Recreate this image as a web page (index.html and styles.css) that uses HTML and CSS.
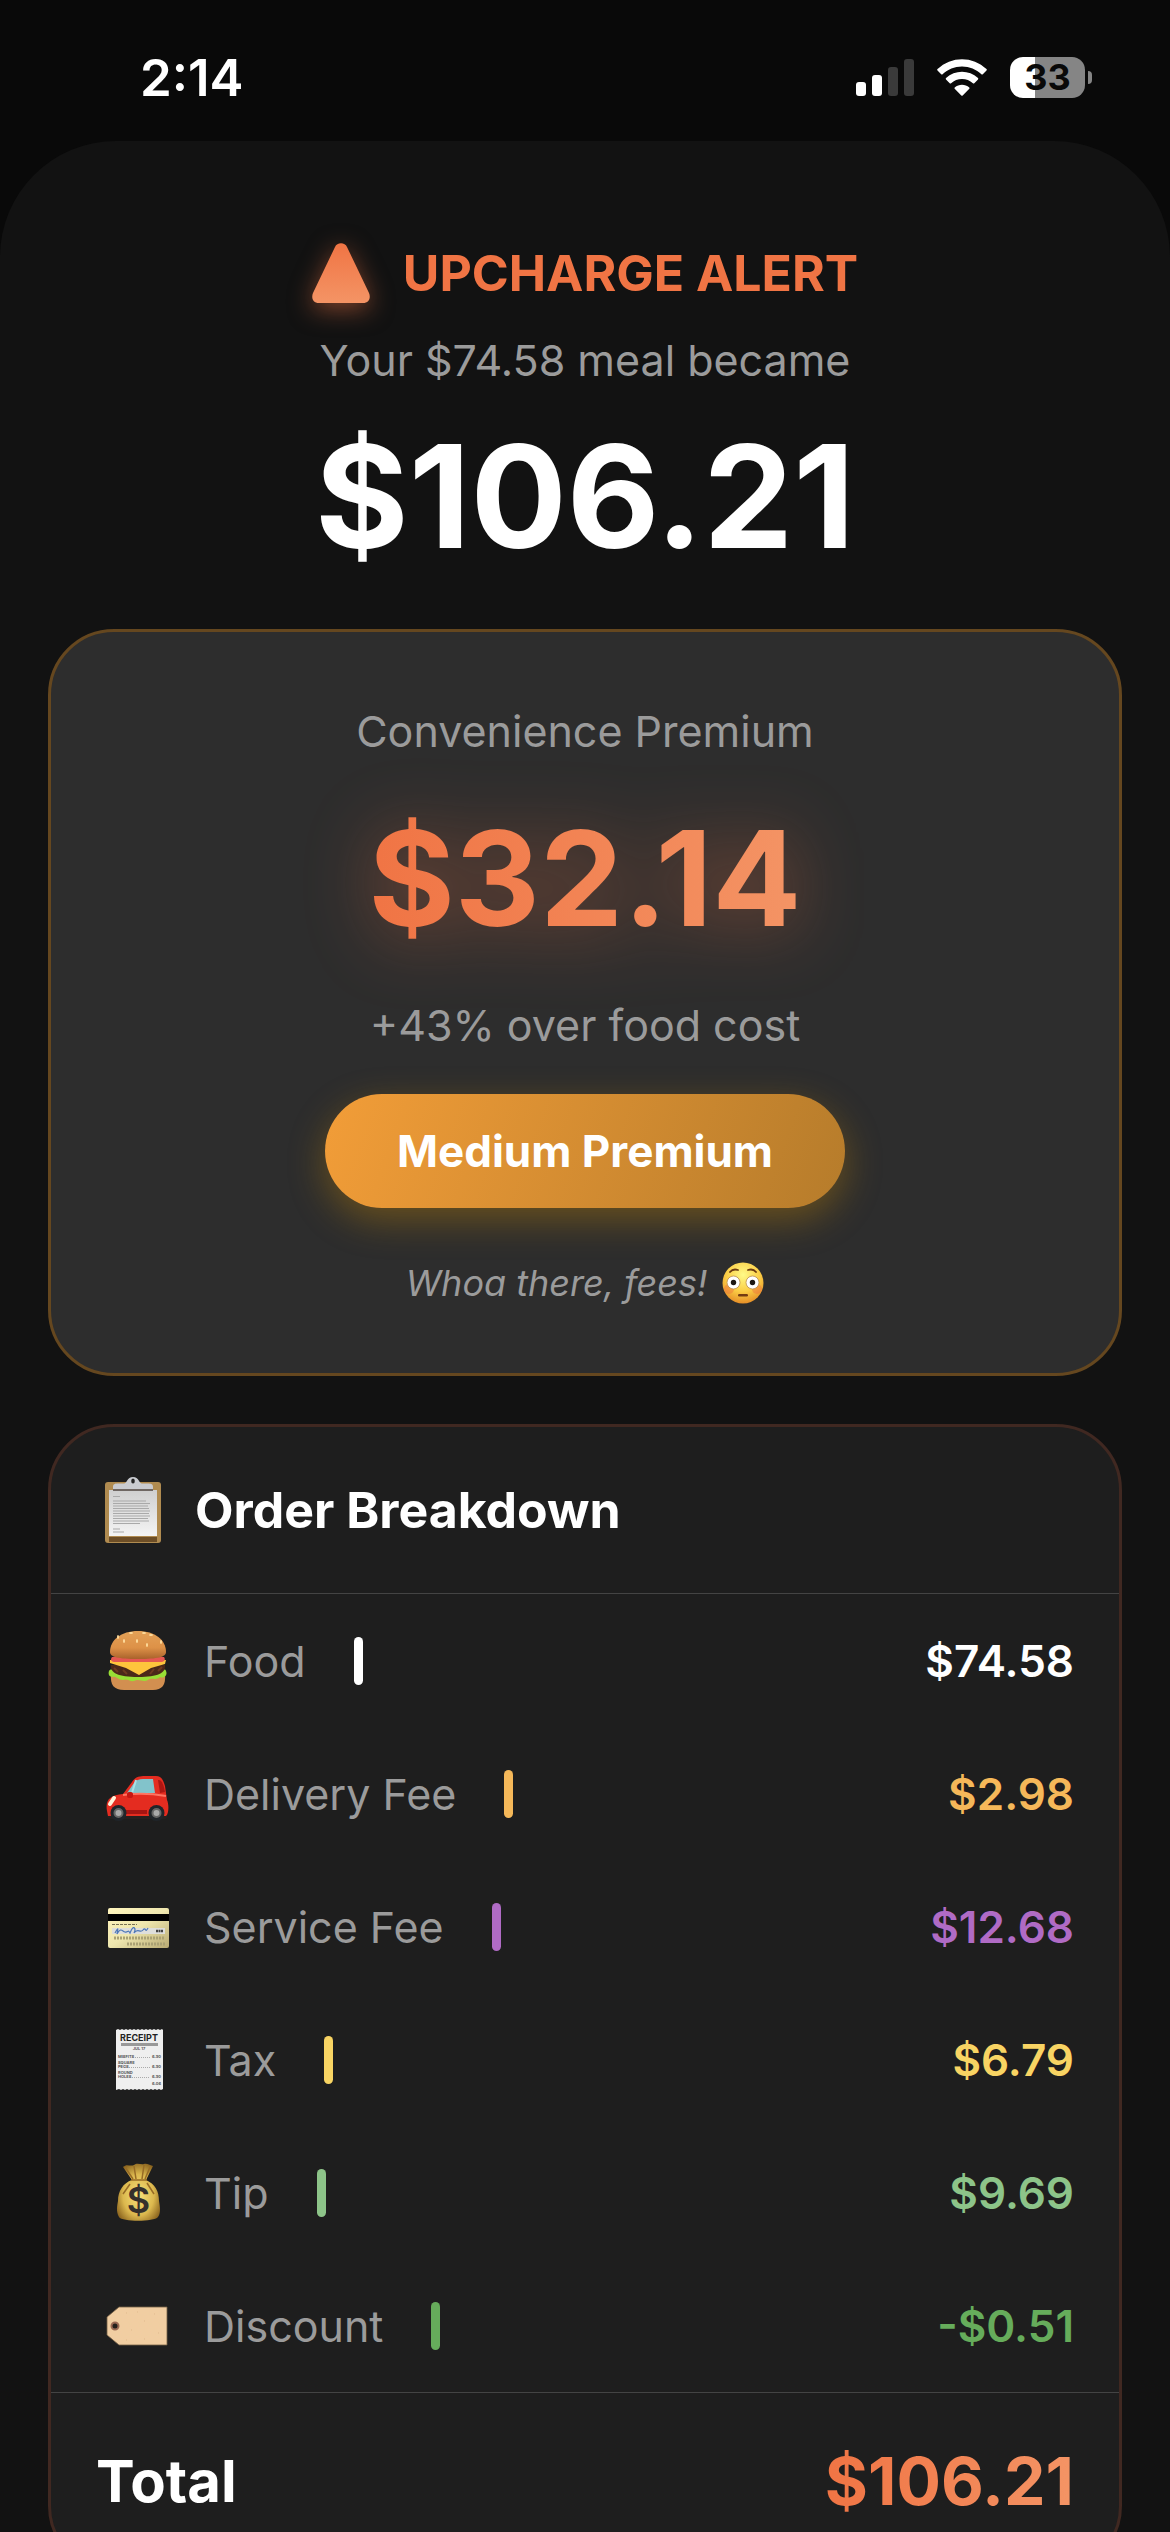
FILE: index.html
```
<!DOCTYPE html>
<html lang="en">
<head>
    <meta charset="UTF-8">
    <meta name="viewport" content="width=device-width, initial-scale=1.0">
    <title>Upcharge Alert</title>
    <link rel="stylesheet" href="styles.css">
</head>
<body>
    <div class="status-bar">
      <span class="time">2:14</span>
      <div class="status-icons">
        <svg width="58" height="37" viewBox="0 0 58 37" fill="#fff">
          <rect x="0" y="23" width="10" height="14" rx="3"/>
          <rect x="16" y="16" width="10" height="21" rx="3"/>
          <rect x="32" y="8" width="10" height="29" rx="3" fill="#3a3a3a"/>
          <rect x="48" y="0" width="10" height="37" rx="3" fill="#3a3a3a"/>
        </svg>
        <svg width="52" height="37" viewBox="0 0 52 37" fill="#fff">
          <path d="M26 7.500C33.500 7.500 40.300 10.400 45.400 15.200C45.800 15.600 46.400 15.600 46.800 15.200L50.500 11.500C50.900 11.100 50.900 10.500 50.500 10.100C36.800-3.200 15.200-3.200 1.500 10.100C1.100 10.500 1.100 11.100 1.500 11.500L5.200 15.200C5.600 15.600 6.200 15.600 6.600 15.200C11.700 10.400 18.500 7.500 26 7.500Z"/>
          <path d="M26 20C30.100 20 34 21.500 36.900 24.200C37.300 24.600 37.900 24.600 38.300 24.200L42 20.500C42.400 20.100 42.400 19.400 42 19C33 10.600 19 10.600 10 19C9.600 19.400 9.600 20.100 10 20.500L13.700 24.200C14.100 24.600 14.700 24.600 15.100 24.200C18 21.500 21.900 20 26 20Z"/>
          <path d="M33.300 28.400C33.700 28.800 33.700 29.400 33.300 29.800L26.700 36.400C26.300 36.800 25.700 36.800 25.300 36.400L18.700 29.800C18.300 29.400 18.300 28.800 18.700 28.400C22.900 24.800 29.100 24.800 33.300 28.400Z"/>
        </svg>
        <div class="battery"><span class="battery-body">33</span><span class="battery-tip"></span></div>
      </div>
    </div>

    <main class="sheet">
      <header class="alert">
        <h1 class="alert-title">
          <svg class="alert-icon" width="58" height="60" viewBox="0 0 58 60">
            <defs>
              <linearGradient id="alertFill" x1="0" y1="0" x2="0" y2="1">
                <stop offset="0" stop-color="#f07444"/>
                <stop offset="1" stop-color="#f49465"/>
              </linearGradient>
            </defs>
            <path d="M23 4C25-1 33-1 35 4L57 50C59 55 57 60 51 60H7C1 60-1 55 1 50Z" fill="url(#alertFill)"/>
          </svg>
          UPCHARGE ALERT
        </h1>
        <p class="muted">Your $74.58 meal became</p>
        <p class="alert-total">$106.21</p>
      </header>

      <section class="card premium">
        <p class="muted">Convenience Premium</p>
        <p class="premium-amount"><span class="gradient-text">$32.14</span></p>
        <p class="muted">+43% over food cost</p>
        <button type="button" class="btn-level">Medium Premium</button>
        <p class="quip">
          <em>Whoa there, fees!</em>
          <svg width="42" height="42" viewBox="0 0 42 42">
            <defs>
              <radialGradient id="faceFill" cx=".5" cy=".3" r=".75">
                <stop offset="0" stop-color="#fffa88"/>
                <stop offset=".55" stop-color="#fbcd45"/>
                <stop offset="1" stop-color="#e28422"/>
              </radialGradient>
            </defs>
            <circle cx="21" cy="21" r="20.500" fill="url(#faceFill)"/>
            <circle cx="7" cy="27" r="5" fill="#ee713d" opacity=".45"/>
            <circle cx="35" cy="27" r="5" fill="#ee713d" opacity=".45"/>
            <path d="M8 10C10 7.500 13 7 16 8M26 8C29 7 32 7.500 34 10" stroke="#6b3a10" stroke-width="1.800" fill="none" stroke-linecap="round"/>
            <circle cx="11.500" cy="20.500" r="6.500" fill="#fff" stroke="#b98d50" stroke-width=".8"/>
            <circle cx="30.500" cy="20.500" r="6.500" fill="#fff" stroke="#b98d50" stroke-width=".8"/>
            <circle cx="11.500" cy="20.500" r="2.700" fill="#1d1714"/>
            <circle cx="30.500" cy="20.500" r="2.700" fill="#1d1714"/>
            <rect x="16" y="32" width="10" height="2.400" rx="1.200" fill="#743c12"/>
          </svg>
        </p>
      </section>

      <section class="card breakdown">
        <h2 class="breakdown-title">
          <svg width="74" height="72" viewBox="0 0 74 72">
            <defs>
              <linearGradient id="paperFill" x1="0" y1="0" x2="0" y2="1">
                <stop offset="0" stop-color="#cfcfcf"/>
                <stop offset="1" stop-color="#f4f4f4"/>
              </linearGradient>
            </defs>
            <rect x="9" y="8" width="56" height="61" rx="3" fill="#b08b50"/>
            <path d="M13 63H61V68H13Z" fill="#6d4e27"/>
            <rect x="13" y="16" width="48" height="46" fill="url(#paperFill)"/>
            <path d="M17 22.500H24M17 27H50M17 29.500H54M17 32H52M17 34.500H53M17 37H54M17 39.500H53M17 42H54M17 44.500H52M17 47H53M17 49.500H44M17 55H24M17 58H28" stroke="#a9a9a9" stroke-width="1"/>
            <path d="M17 16V13C17 10 19 9.500 22 9.500H28C31 9.500 31 3 37 3S43 9.500 46 9.500H52C55 9.500 57 10 57 13V16Z" fill="#c9cbd0"/>
            <path d="M17 15H57V17H17Z" fill="#6f6763"/>
            <ellipse cx="37" cy="7" rx="1.800" ry="2.600" fill="#252525"/>
          </svg>
          Order Breakdown
        </h2>
        <table class="fees">
          <tbody>
            <tr>
              <th scope="row">
                <div class="fee">
                  <svg width="84" height="72" viewBox="0 0 84 72">
                    <defs>
                      <linearGradient id="bunFill" x1="0" y1="0" x2="0" y2="1">
                        <stop offset="0" stop-color="#e3a157"/>
                        <stop offset=".6" stop-color="#dd9147"/>
                        <stop offset="1" stop-color="#a9622b"/>
                      </linearGradient>
                    </defs>
                    <path d="M15 49H69C70 60 66 65 57 65H28C18 65 14 60 15 49Z" fill="#d28f50"/>
                    <path d="M13 46C15 42 20 47 25 45C35 49 50 49 60 45C65 47 69 42 70 46C72 50 68 54 64 52C60 56 56 52 52 55C47 58 43 53 38 56C34 57 31 53 27 55C22 55 20 51 17 52C13 52 12 49 13 46Z" fill="#98df35"/>
                    <path d="M15 40H69C70 48 62 52 42 52S14 48 15 40Z" fill="#4b2819"/>
                    <path d="M18 43L22 47M27 45L31 49M54 49L58 44M62 46L66 42" stroke="#6d3b20" stroke-width="2"/>
                    <path d="M14 35H70L69 39L55 43L43 50L30 43L14 38Z" fill="#fec43c"/>
                    <path d="M16 32H68C70 35 68 37 64 37H20C15 37 14 35 16 32Z" fill="#e65752"/>
                    <path d="M14 27C14 15 25 6 42 6S70 15 70 27C70 32 62 34 42 34S14 32 14 27Z" fill="url(#bunFill)"/>
                    <g fill="#ffdd9e"><ellipse cx="22" cy="12" rx="1" ry="2"/><ellipse cx="28" cy="16" rx="1" ry="2"/><ellipse cx="35" cy="8" rx="2" ry="1"/><ellipse cx="41" cy="16" rx="1" ry="2"/><ellipse cx="51" cy="20" rx="1" ry="2"/><ellipse cx="55" cy="10" rx="2" ry="1"/><ellipse cx="48" cy="8" rx="2" ry="1"/><ellipse cx="65" cy="17" rx="1" ry="2"/></g>
                  </svg>
                  <span>Food</span><i class="bar food"></i>
                </div>
              </th>
              <td>$74.58</td>
            </tr>
            <tr>
              <th scope="row">
                <div class="fee">
                  <svg width="84" height="72" viewBox="0 0 84 72">
                    <path d="M13 50L71 50V59C71 61 69 61 67 61H15C11 61 10 57 11 51Z" fill="#27201f"/>
                    <path d="M11 53C9 42 14 37 27 36L36 24C39 19 43 18 49 18H60C65 18 67 21 69 28L71 42C73 46 73 56 70 58H12Z" fill="#e42c20"/>
                    <path d="M31 35L38 25C40 22 43 21 47 21H57L59 35Z" fill="#82c3cb"/>
                    <path d="M40 22L36 35" stroke="#a9e1e5" stroke-width="2"/>
                    <path d="M62 22C66 21 68 28 69 34L64 35Z" fill="#ad1612"/>
                    <path d="M27 37C42 35 58 36 70 38" stroke="#ff7462" stroke-width="2" fill="none"/>
                    <path d="M26 54H51" stroke="#a51512" stroke-width="4"/>
                    <path d="M14 46L18 40" stroke="#fff4dc" stroke-width="4" stroke-linecap="round"/>
                    <rect x="31" y="34" width="6" height="6" rx="2" fill="#c81712"/>
                    <g fill="#20252a"><circle cx="22.500" cy="55" r="8"/><circle cx="60.500" cy="55" r="8"/></g>
                    <g fill="#aaa" stroke="#666" stroke-width="2"><circle cx="22.500" cy="55" r="4"/><circle cx="60.500" cy="55" r="4"/></g>
                  </svg>
                  <span>Delivery Fee</span><i class="bar delivery"></i>
                </div>
              </th>
              <td class="delivery">$2.98</td>
            </tr>
            <tr>
              <th scope="row">
                <div class="fee">
                  <svg width="84" height="72" viewBox="0 0 84 72">
                    <defs>
                      <linearGradient id="cardFill" x1="0" y1="0" x2="1" y2="1">
                        <stop offset="0" stop-color="#fff5bd"/>
                        <stop offset=".5" stop-color="#eee6ae"/>
                        <stop offset="1" stop-color="#b8aa73"/>
                      </linearGradient>
                    </defs>
                    <rect x="12" y="17" width="61" height="40" rx="2" fill="url(#cardFill)"/>
                    <path d="M12 23H73V30H12Z" fill="#000"/>
                    <path d="M16 33.500H41" stroke="#777052" stroke-width="1" stroke-dasharray="3 1"/>
                    <rect x="16" y="37" width="53" height="6" fill="#dededb"/>
                    <path d="M19 42C23 35 22 38 21 43C25 36 26 40 29 41S32 38 34 42C38 32 40 38 38 42C42 36 44 43 47 39S49 43 52 37" stroke="#4d78b8" stroke-width="1.200" fill="none"/>
                    <path d="M60 40H67" stroke="#444" stroke-width="2.500" stroke-dasharray="2 .5"/>
                    <path d="M18 47H69M31 53H70" stroke="#aaa174" stroke-width="3" stroke-dasharray="2 1"/>
                  </svg>
                  <span>Service Fee</span><i class="bar service"></i>
                </div>
              </th>
              <td class="service">$12.68</td>
            </tr>
            <tr>
              <th scope="row">
                <div class="fee">
                  <svg width="84" height="72" viewBox="0 0 84 72">
                    <path d="M20 6L22 5L24 6L26 5L28 6L30 5L32 6L34 5L36 6L38 5L40 6L42 5L44 6L46 5L48 6L50 5L52 6L54 5L56 6L58 5L60 6L62 5L64 6L66 5L67 6V65L65 66L63 65L61 66L59 65L57 66L55 65L53 66L51 65L49 66L47 65L45 66L43 65L41 66L39 65L37 66L35 65L33 66L31 65L29 66L27 65L25 66L23 65L20 66Z" fill="#efefef"/>
                    <text class="receipt-head" x="43" y="17" text-anchor="middle">RECEIPT</text>
                    <path d="M25 19H62V22H25Z" fill="#999"/>
                    <text class="receipt-line" x="43" y="26" text-anchor="middle">JUL 17</text>
                    <text class="receipt-line" x="22" y="34">MISFITS</text>
                    <text class="receipt-line" x="22" y="40">SQUARE</text>
                    <text class="receipt-line" x="22" y="44">PEGS</text>
                    <text class="receipt-line" x="22" y="50">ROUND</text>
                    <text class="receipt-line" x="22" y="54">HOLES</text>
                    <path d="M39 33.500H54M33 43.500H54M36 53.500H54" stroke="#aaa" stroke-width="1" stroke-dasharray="1 1"/>
                    <g class="receipt-line" text-anchor="end"><text x="65" y="34">6.90</text><text x="65" y="44">6.90</text><text x="65" y="54">6.90</text><text x="65" y="61">6.06</text></g>
                  </svg>
                  <span>Tax</span><i class="bar tax"></i>
                </div>
              </th>
              <td class="tax">$6.79</td>
            </tr>
            <tr>
              <th scope="row">
                <div class="fee">
                  <svg width="84" height="72" viewBox="0 0 84 72">
                    <defs>
                      <radialGradient id="bagFill" cx=".5" cy=".55" r=".6">
                        <stop offset="0" stop-color="#f8e27a"/>
                        <stop offset=".6" stop-color="#dcb84e"/>
                        <stop offset="1" stop-color="#87601c"/>
                      </radialGradient>
                    </defs>
                    <path d="M27 10C31 6 34 10 38 8C41 5 45 8 48 7C51 6 53 8 57 9L50 23C59 27 63 34 63 44C64 50 65 56 62 60C58 65 26 65 23 60C20 55 21 49 22 44C22 34 27 26 36 23Z" fill="url(#bagFill)"/>
                    <path d="M29 10L37 22M38 9L40 22M48 8L46 22M54 10L49 22M35 23H51M34 27L27 37M51 26L58 37" stroke="#976b25" stroke-width="1.500"/>
                    <text class="bag-sign" x="42.500" y="56" text-anchor="middle">$</text>
                  </svg>
                  <span>Tip</span><i class="bar tip"></i>
                </div>
              </th>
              <td class="tip">$9.69</td>
            </tr>
            <tr>
              <th scope="row">
                <div class="fee">
                  <svg width="84" height="72" viewBox="0 0 84 72">
                    <path d="M23 17H71V55H23L11 45V27Z" fill="#f1cea2" stroke="#756044" stroke-width=".8"/>
                    <circle cx="19" cy="36" r="3.500" fill="#24201d" stroke="#9b6b54" stroke-width="2"/>
                    <path d="M30 23H31M41 22H42M58 24H59M48 31H49M35 40H36M62 43H63M48 49H49M30 50H31" stroke="#dfb98d"/>
                  </svg>
                  <span>Discount</span><i class="bar discount"></i>
                </div>
              </th>
              <td class="discount">-$0.51</td>
            </tr>
          </tbody>
        </table>
        <div class="total">
          <span>Total</span>
          <span class="total-amount gradient-text">$106.21</span>
        </div>
      </section>
    </main>
</body>
</html>
```

FILE: styles.css
```
* { box-sizing: border-box; }
html { scrollbar-width: none; background: #090909; }
body { margin: 0; font-family: Inter, "Liberation Sans", sans-serif; font-size: 44px; line-height: 54px; color: #fff; background: #090909; }
h1, h2, p { margin: 0; }
svg { flex: none; display: block; }

.status-bar { display: flex; justify-content: space-between; align-items: center; height: 141px; padding: 14px 78px 0 140px; }
.time { font-size: 51px; font-weight: 600; }
.status-icons { display: flex; align-items: center; gap: 22px; }
.battery { display: flex; align-items: center; gap: 3px; }
.battery-body { width: 75px; height: 41px; border-radius: 13px; background: linear-gradient(90deg, #fff 34%, #858585 34%); color: #090909; font-size: 36px; line-height: 41px; font-weight: 700; text-align: center; }
.battery-tip { width: 4px; height: 13px; border-radius: 0 4px 4px 0; background: #858585; }

.sheet { padding: 96px 48px; border-radius: 116px 116px 0 0; background: #121212; }
.muted { font-size: 43px; color: #9b9b9b; }

.alert { text-align: center; margin-bottom: 48px; }
.alert-title { display: flex; justify-content: center; align-items: center; gap: 33px; margin-bottom: 24px; font-size: 50px; line-height: 72px; font-weight: 700; color: #f07444; }
.alert-icon { overflow: visible; filter: drop-shadow(0 6px 12px rgba(240, 116, 68, .5)); }
.alert-total { margin-top: 24px; font-size: 143px; line-height: 170px; font-weight: 700; }

.card { border: 3px solid; border-radius: 66px; }
.premium { display: flex; flex-direction: column; align-items: center; padding: 72px 48px 66px; margin-bottom: 48px; background: #2d2d2d; border-color: #65471f; text-align: center; }
.premium-amount { margin: 42px 0; font-size: 132px; line-height: 156px; font-weight: 700; filter: drop-shadow(0 6px 36px rgba(240, 116, 68, .45)); }
.gradient-text { background: linear-gradient(90deg, #f07444, #f49465); -webkit-background-clip: text; background-clip: text; color: transparent; }
.btn-level { height: 114px; margin: 42px 0 51px; padding: 0 72px; border: none; border-radius: 57px; background: linear-gradient(110deg, #f29d38, #b67c2b); box-shadow: 0 12px 36px rgba(180, 125, 10, .45); color: #fff; font: inherit; font-weight: 700; cursor: pointer; }
.quip { display: flex; align-items: center; gap: 15px; font-size: 36px; line-height: 48px; color: #9b9b9b; }

.breakdown { background: #1e1e1e; border-color: #402821; }
.breakdown-title { display: flex; align-items: center; gap: 25px; height: 167px; padding: 0 45px; border-bottom: 1px solid #444; font-size: 50px; font-weight: 700; }
.fees { width: 100%; border-collapse: collapse; }
.fees th, .fees td { height: 133px; padding: 0 45px; vertical-align: middle; }
.fees th { font-size: 43px; font-weight: 400; color: #9b9b9b; text-align: left; }
.fees td { font-weight: 600; text-align: right; }
.fee { display: flex; align-items: center; }
.fee span { margin: 0 48px 0 24px; }
.bar { width: 9px; height: 48px; border-radius: 5px; background: currentColor; }
.food { color: #fff; }
.fees .delivery { color: #f5b859; }
.fees .service { color: #b06bc5; }
.fees .tax { color: #f8d463; }
.fees .tip { color: #8dc489; }
.fees .discount { color: #66ac5b; }
.receipt-head { font-size: 9px; font-weight: 700; fill: #222; }
.receipt-line { font-size: 4px; font-weight: 700; fill: #555; }
.bag-sign { font-size: 36px; font-weight: 600; fill: #35302c; }

.total { display: flex; justify-content: space-between; align-items: center; height: 177px; padding: 0 45px; border-top: 1px solid #444; font-size: 58px; font-weight: 700; }
.total-amount { font-size: 66px; line-height: 78px; }
```
